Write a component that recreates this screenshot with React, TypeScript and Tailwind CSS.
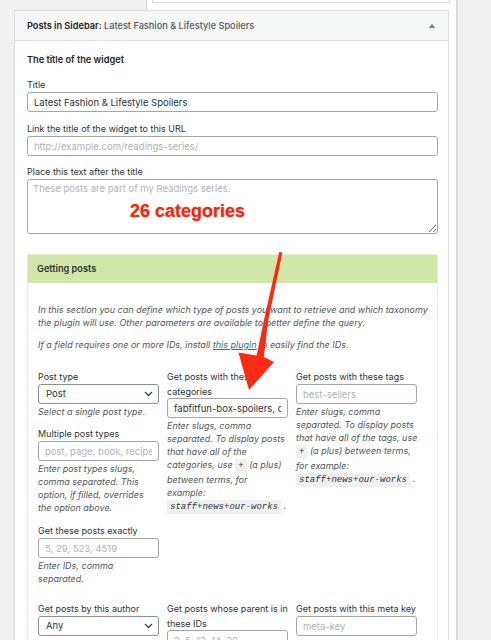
import type { ReactNode } from "react";

const inputCls =
  "block w-full h-[20px] px-[6px] rounded-[3px] border border-[#a2a5aa] bg-white text-[9.5px] text-[#2c3338] placeholder:text-[#b0b3b7] outline-none";

function Label({ children }: { children: ReactNode }) {
  return <div className="text-[9px] leading-[15px] whitespace-nowrap text-[#2c3338]">{children}</div>;
}

function Hint({ children }: { children: ReactNode }) {
  return (
    <div className="text-[9px] leading-[13px] italic whitespace-nowrap text-[#50575e] mt-[1px]">{children}</div>
  );
}

function Code({ children }: { children: ReactNode }) {
  return (
    <code className="inline-block bg-[#f0f0f1] px-[3px] leading-[14px] font-['Liberation_Mono',monospace] italic text-[9px] text-[#2c3338]">
      {children}
    </code>
  );
}

function Select({ value }: { value: string }) {
  return (
    <div className="h-[20px] flex items-center justify-between pl-[7px] pr-[5px] rounded-[3px] border border-[#8c8f94] bg-white text-[9.5px] text-[#2c3338]">
      <span>{value}</span>
      <svg width="9" height="6" viewBox="0 0 9 6" fill="none">
        <path d="M1 1l3.5 3.5L8 1" stroke="#3c434a" strokeWidth="1.3" />
      </svg>
    </div>
  );
}

function Arrow() {
  // red annotation arrow drawn over the form
  return (
    <svg className="absolute left-0 top-0 pointer-events-none" width="491" height="640" viewBox="0 0 491 640">
      <polygon
        points="279.2,252 282.4,252.5 268.4,320 263.8,357 274,362 249,390 238.5,352.5 256.6,355.5 264,320"
        fill="#fb2a12"
      />
    </svg>
  );
}

export default function App() {
  return (
    <div className="relative w-[491px] h-[640px] overflow-hidden bg-[#f0f0f1] flex font-['Inter',sans-serif]">
      <div className="w-[456px] flex flex-col">
        {/* bottom edge of the previous widget */}
        <div className="h-[10px] flex shrink-0">
          <div className="w-[146px]" />
          <div className="flex-1 bg-white border-l border-[#dcdcde] pl-[5px] pr-[6px]">
            <div className="h-[3px] border-x border-b border-[#dcdcde]" />
          </div>
        </div>

        <div className="flex flex-1">
          <div className="w-[14px]" />
          <div className="w-[435px] bg-white border border-b-0 border-[#dcdcde]">
            <div className="h-[30px] bg-[#f6f7f7] border-b border-[#dcdcde] flex items-center justify-between pl-[12px] pr-[13px]">
              <div className="text-[9.2px]">
                <span className="font-semibold text-[#1d2327]">Posts in Sidebar:</span>
                <span className="font-medium text-[#50575e]"> Latest Fashion &amp; Lifestyle Spoilers</span>
              </div>
              <div className="w-0 h-0 border-x-[3.5px] border-x-transparent border-b-[4px] border-b-[#787c82]" />
            </div>

            <div className="pl-[12px] pr-[10px] pt-[11px]">
              <div className="text-[9.2px] leading-[15px] font-semibold text-[#1d2327]">The title of the widget</div>

              <div className="mt-[10px]">
                <Label>Title</Label>
                <input className={inputCls} defaultValue="Latest Fashion & Lifestyle Spoilers" />
              </div>

              <div className="mt-[9px]">
                <Label>Link the title of the widget to this URL</Label>
                <input className={`${inputCls} h-[19px]`} placeholder="http://example.com/readings-series/" />
              </div>

              <div className="mt-[8px]">
                <Label>Place this text after the title</Label>
                <div className="relative">
                  <textarea
                    className="block w-full h-[55px] px-[5px] py-[2px] rounded-[3px] border border-[#a2a5aa] text-[9.5px] leading-[13px] placeholder:text-[#b0b3b7] outline-none"
                    placeholder="These posts are part of my Readings series."
                  />
                  <div className="absolute left-[103px] top-[20px] font-['Liberation_Sans',sans-serif] font-bold text-[18px] leading-[24px] text-[#ff2200] [text-shadow:0_0_2px_rgba(0,0,0,0.3)]">
                    26 categories
                  </div>
                </div>
              </div>

              {/* Getting posts panel */}
              <div className="mt-[20px] border border-[#e3efcf]">
                <div className="h-[28px] bg-[#d0e7a7] flex items-center pl-[9px] text-[9.2px] font-semibold text-[#2c3338]">
                  Getting posts
                </div>
                <div className="pl-[10px] pt-[20px]">
                  <p className="text-[9px] leading-[13px] italic text-[#50575e]">
                    In this section you can define which type of posts you want to retrieve and which taxonomy
                    <br />
                    the plugin will use. Other parameters are available to better define the query.
                  </p>
                  <p className="mt-[9px] text-[9px] leading-[13px] italic text-[#50575e]">
                    If a field requires one or more IDs, install{" "}
                    <span className="text-[#2271b1] underline">this plugin</span> to easily find the IDs.
                  </p>

                  <div className="mt-[18px] grid grid-cols-[121px_121px_121px] gap-x-[8px]">
                    <div className="flex flex-col">
                      <Label>Post type</Label>
                      <Select value="Post" />
                      <Hint>Select a single post type.</Hint>

                      <div className="mt-[8px]">
                        <Label>Multiple post types</Label>
                        <input className={inputCls} placeholder="post, page, book, recipe" />
                        <Hint>
                          Enter post types slugs,
                          <br />
                          comma separated. This
                          <br />
                          option, if filled, overrides
                          <br />
                          the option above.
                        </Hint>
                      </div>

                      <div className="mt-[9px]">
                        <Label>Get these posts exactly</Label>
                        <input className={inputCls} placeholder="5, 29, 523, 4519" />
                        <Hint>
                          Enter IDs, comma
                          <br />
                          separated.
                        </Hint>
                      </div>
                    </div>

                    <div>
                      <Label>
                        Get posts with these
                        <br />
                        categories
                      </Label>
                      <input className={`${inputCls} -mt-[1px]`} defaultValue="fabfitfun-box-spoilers, coupons" />
                      <Hint>
                        Enter slugs, comma
                        <br />
                        separated. To display posts
                        <br />
                        that have all of the
                        <br />
                        categories, use <Code>+</Code> (a plus)
                        <br />
                        between terms, for
                        <br />
                        example:
                        <br />
                        <Code>staff+news+our-works</Code> .
                      </Hint>
                    </div>

                    <div>
                      <Label>Get posts with these tags</Label>
                      <input className={inputCls} placeholder="best-sellers" />
                      <Hint>
                        Enter slugs, comma
                        <br />
                        separated. To display posts
                        <br />
                        that have all of the tags, use
                        <br />
                        <Code>+</Code> (a plus) between terms,
                        <br />
                        for example:
                        <br />
                        <Code>staff+news+our-works</Code> .
                      </Hint>
                    </div>
                  </div>

                  <div className="mt-[16px] grid grid-cols-[121px_121px_121px] gap-x-[8px]">
                    <div>
                      <Label>Get posts by this author</Label>
                      <Select value="Any" />
                    </div>
                    <div>
                      <Label>
                        Get posts whose parent is in
                        <br />
                        these IDs
                      </Label>
                      <input className={`${inputCls} -mt-[1px]`} placeholder="2, 5, 12, 14, 20" />
                    </div>
                    <div>
                      <Label>Get posts with this meta key</Label>
                      <input className={inputCls} placeholder="meta-key" />
                    </div>
                  </div>
                  <div className="h-[40px]" />
                </div>
              </div>
            </div>
          </div>
          <div className="flex-1 bg-white" />
        </div>
      </div>
      <div className="flex-1 border-l-2 border-[#dcdcde]" />
      <Arrow />
    </div>
  );
}
